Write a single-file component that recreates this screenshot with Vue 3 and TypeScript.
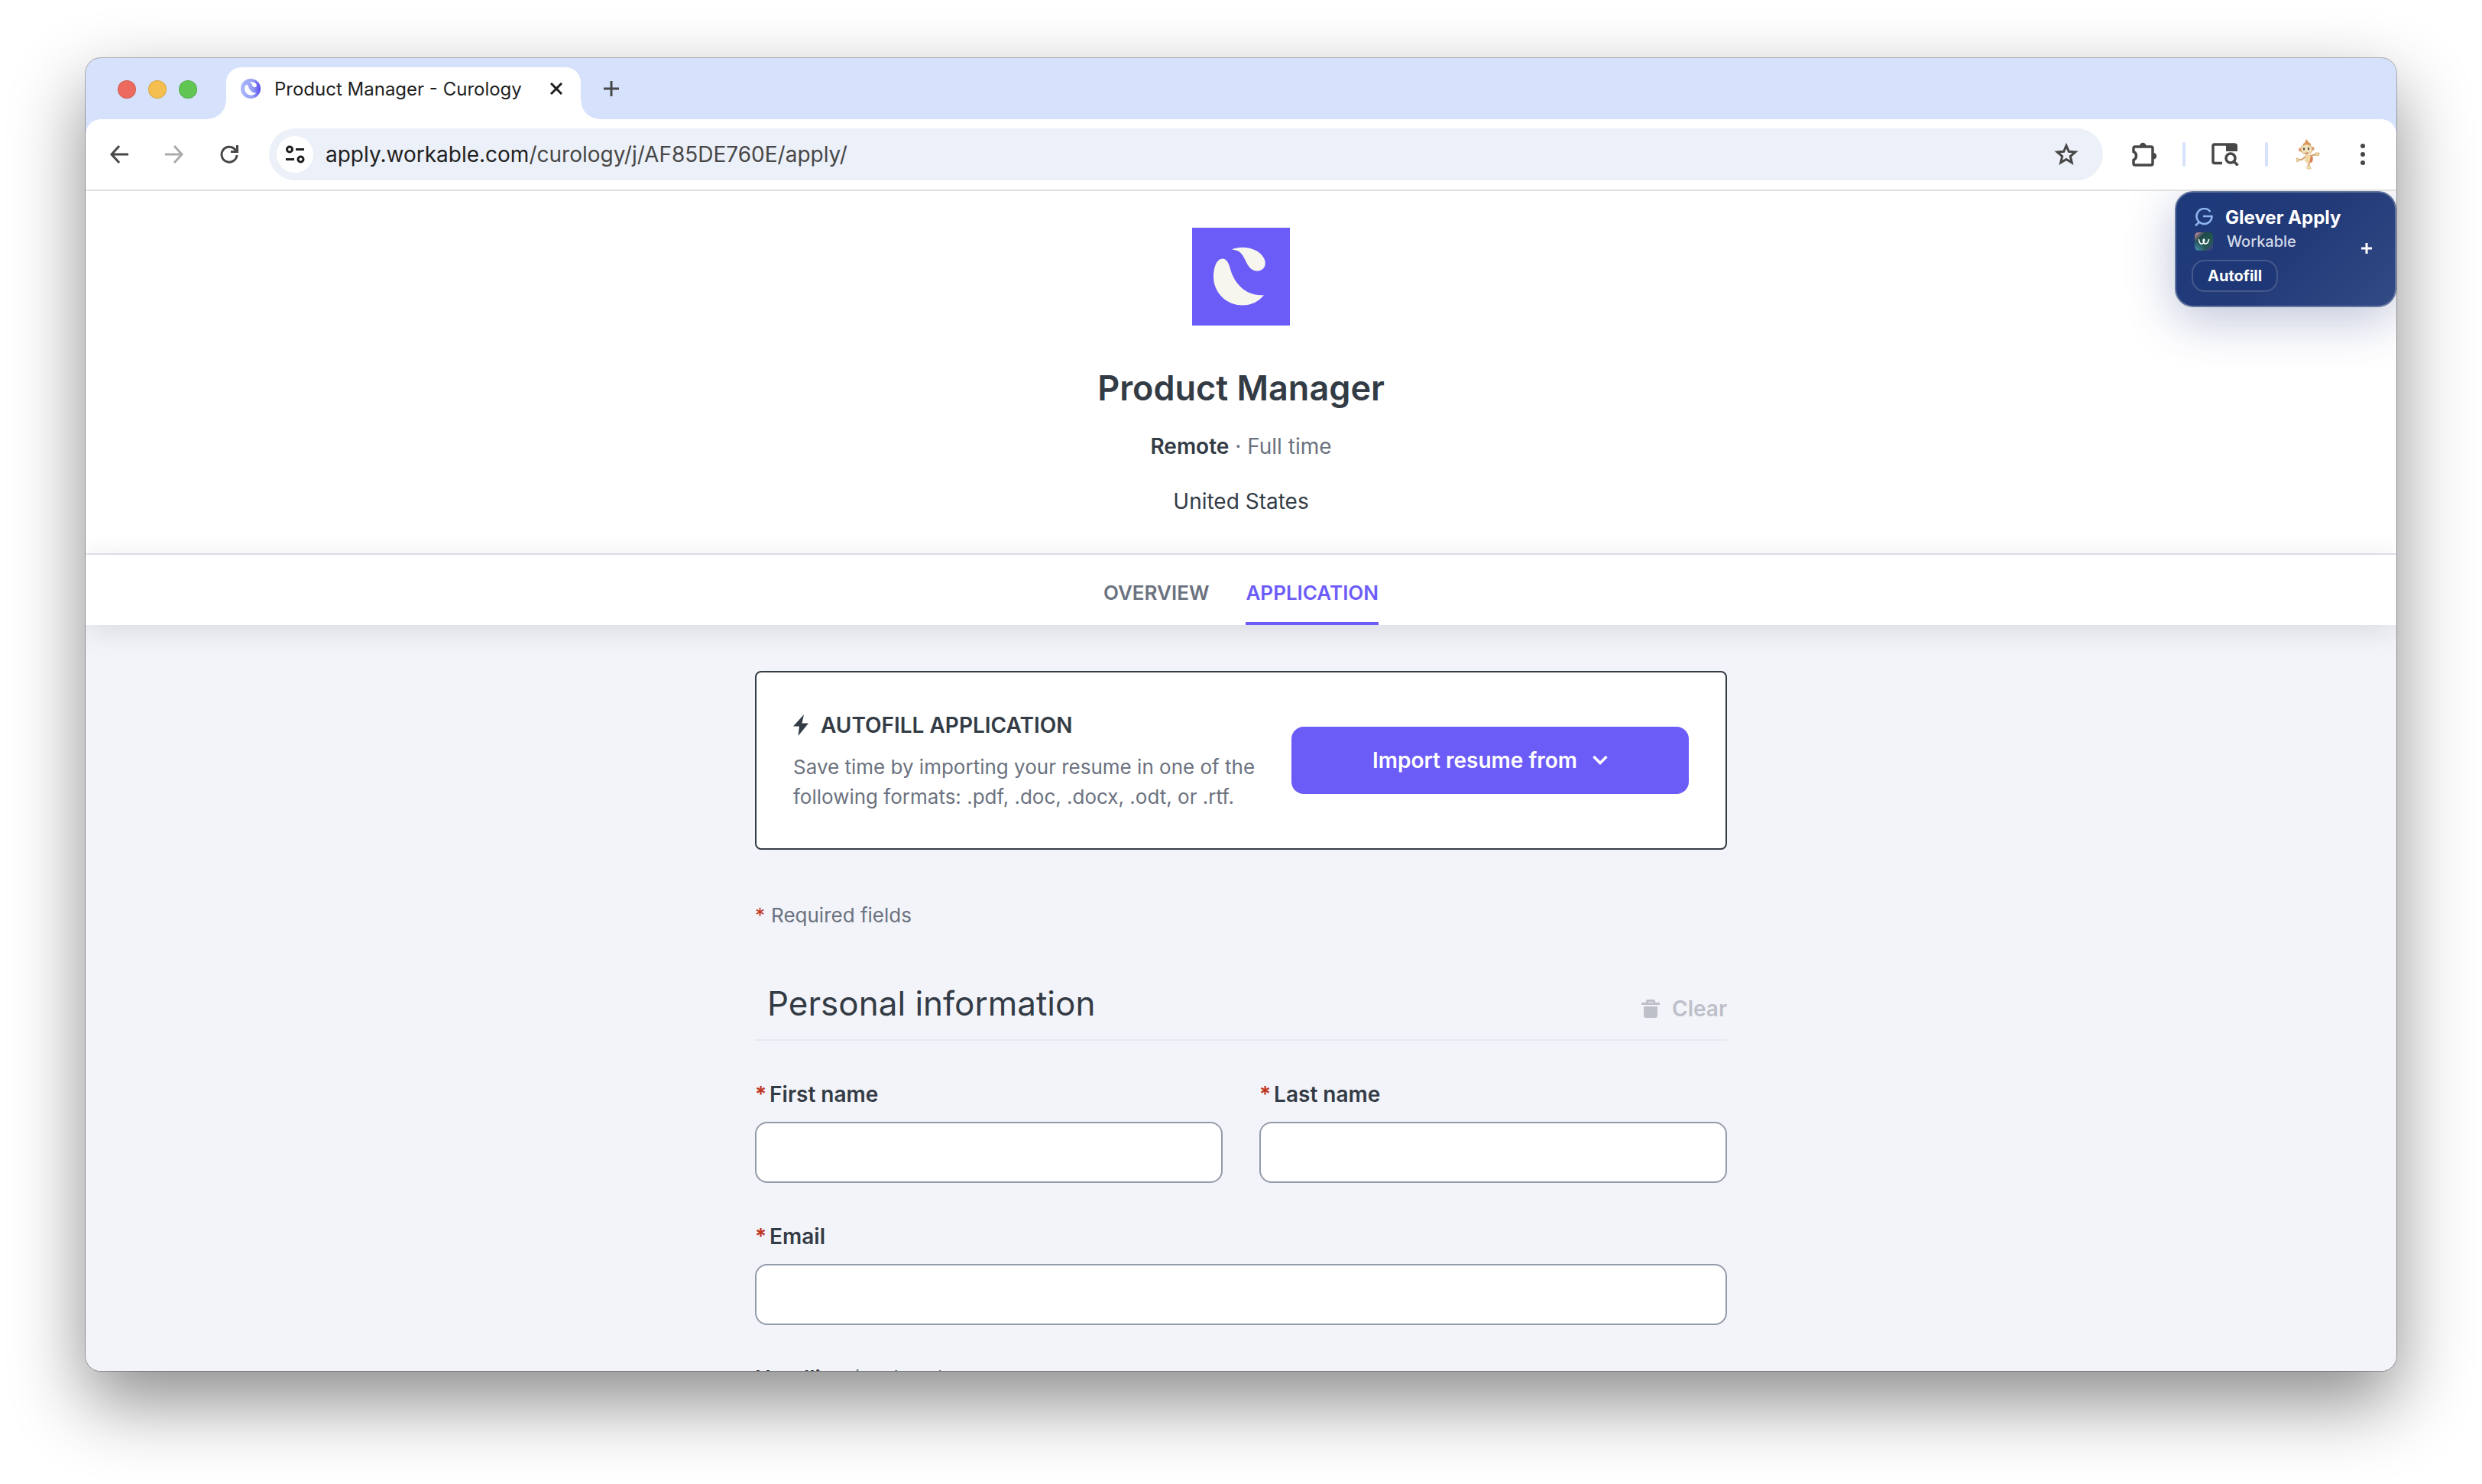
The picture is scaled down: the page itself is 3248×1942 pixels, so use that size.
<script setup lang="ts">
import { ref } from 'vue'

const url = ref({ host: 'apply.workable.com', path: '/curology/j/AF85DE760E/apply/' })
const firstName = ref('')
const lastName = ref('')
const email = ref('')
const headline = ref('')
</script>

<template>
  <div class="desktop">
    <div class="window">
      <header class="tabstrip">
        <div class="lights">
          <button class="light red" aria-label="Close window"></button>
          <button class="light yellow" aria-label="Minimize window"></button>
          <button class="light green" aria-label="Zoom window"></button>
        </div>
        <div class="tab">
          <svg class="favicon" viewBox="0 0 128 128" aria-hidden="true">
            <defs>
              <linearGradient id="fav" x1="0" y1="0" x2="1" y2="0">
                <stop offset="0" stop-color="#a9b8f8" />
                <stop offset="0.600" stop-color="#969ff6" />
                <stop offset="1" stop-color="#5b4bef" />
              </linearGradient>
            </defs>
            <circle cx="64" cy="64" r="64" fill="url(#fav)" />
            <g transform="translate(64 64) scale(1.15) translate(-62 -64)" fill="#fff">
              <path d="M52 29C60 25 74 25 84 30C93 35 97 42 95 49C93 56 86 58 80 55C71 51 70 40 64 33C61 30 57 29 52 29Z" />
              <path d="M40 41C45 41 48 46 50 54C56 75 72 89 94 88C87 97 77 101 66 101C44 101 28 84 28 64C28 52 32 41 40 41Z" />
            </g>
          </svg>
          <span class="tab-title">Product Manager - Curology</span>
          <button class="tab-close" aria-label="Close tab">
            <svg viewBox="0 0 16 16"><path d="M1 1L15 15M15 1L1 15" stroke="#1f1f1f" stroke-width="3" /></svg>
          </button>
        </div>
        <button class="new-tab" aria-label="New tab">
          <svg viewBox="0 0 20 20"><path d="M10 0V20M0 10H20" stroke="#474747" stroke-width="3" /></svg>
        </button>
      </header>

      <div class="toolbar">
        <div class="nav-buttons">
          <button aria-label="Back">
            <svg viewBox="0 0 24 24" fill="none" stroke="#474747" stroke-width="3"><path d="M24 12H2M12 1L2 12L12 23" /></svg>
          </button>
          <button aria-label="Forward">
            <svg viewBox="0 0 24 24" fill="none" stroke="#ababab" stroke-width="3"><path d="M0 12H22M12 1L22 12L12 23" /></svg>
          </button>
          <button aria-label="Reload">
            <svg viewBox="0 0 24 24" fill="none" stroke="#474747" stroke-width="3"><path d="M22 13A10 10 0 1 1 19 5L22 8M22.500 0V8.500H14" /></svg>
          </button>
        </div>
        <div class="omnibox">
          <button class="site-info" aria-label="View site information">
            <svg viewBox="0 0 26 24" fill="none" stroke="#1f1f1f" stroke-width="3">
              <circle cx="6" cy="5.500" r="3.500" /><path d="M14 5.500H25M1 18.500H12" /><circle cx="20.500" cy="18.500" r="3.500" />
            </svg>
          </button>
          <span class="url">{{ url.host }}<span class="path">{{ url.path }}</span></span>
          <button class="star" aria-label="Bookmark this tab">
            <svg viewBox="0 0 32 32" fill="none" stroke="#474747" stroke-width="3"><path d="M16 4.500L19.300 12.300L27.800 13L21.300 18.600L23.300 26.900L16 22.500L8.700 26.900L10.700 18.600L4.200 13L12.700 12.300Z" /></svg>
          </button>
        </div>
        <div class="actions">
          <button class="ext" aria-label="Extensions">
            <svg viewBox="0 0 32 32">
              <path d="M3.500 6.500Q2 6.500 2 8V12.500Q5.500 14 5.500 18Q5.500 21.500 2 23.500V28Q2 30 4 30H25Q27 30 27 28V8Q27 6 25 6H4Q2 6 2 8" fill="none" stroke="#474747" stroke-width="3.500" />
              <path d="M10 5A4.200 4.200 0 0 1 18.500 5ZM28 14A4.200 4.200 0 0 1 28 22.500Z" fill="#474747" />
            </svg>
          </button>
          <span class="divider"></span>
          <button class="side" aria-label="Search page in side panel">
            <svg viewBox="0 0 36 30" fill="none" stroke="#474747" stroke-width="3.500">
              <path d="M14 26.500H4Q2 26.500 2 24.500V4Q2 2 4 2H30Q32 2 32 4" />
              <path d="M19 1H31Q34 1 34 4V11H19Z" fill="#474747" stroke="none" />
              <circle cx="25" cy="20" r="6" /><path d="M29 24L34.500 29.500" />
            </svg>
          </button>
          <span class="divider"></span>
          <button class="avatar" aria-label="Profile">
            <svg viewBox="0 0 32 40">
              <path d="M11 11Q8 6 12 5L14 0L17 4Q22 6 19 11Z" fill="#dc9557" />
              <circle cx="6.500" cy="14" r="2.500" fill="#d9986a" /><circle cx="22" cy="12.500" r="2.500" fill="#d9986a" />
              <ellipse cx="14.500" cy="13.500" rx="7.500" ry="6.500" fill="#f1e2bb" stroke="#dba36c" />
              <path d="M11 11.500V14.500M17 11V14" stroke="#5a4a42" stroke-width="2" />
              <path d="M11 17Q14 19 17 16.500Q15 21.500 11 17" fill="#b8604f" />
              <path d="M12 21Q17 19 20 22L22 30L17 33L12 29Z" fill="#f0d9a4" />
              <path d="M13 23L8 27L2 27M19 22L25 20.500L30 20M18 31L17 36" fill="none" stroke="#d5a070" stroke-width="2" />
              <path d="M15 35L15 39H20L19 35Z" fill="#f2e2b4" stroke="#dfc490" />
              <path d="M1 25L5 26L4 29L2 30Z M26 18L31 18L31 21L27 22Z" fill="#f0dcae" stroke="#d9b884" />
              <path d="M20 22L23 24L22 30L18 31Z" fill="#d77f55" />
            </svg>
          </button>
          <button class="more" aria-label="Menu">
            <svg viewBox="0 0 8 28" fill="#474747"><circle cx="4" cy="3" r="3" /><circle cx="4" cy="14" r="3" /><circle cx="4" cy="25" r="3" /></svg>
          </button>
        </div>
      </div>

      <div class="page">
        <aside class="glever">
          <div class="g-main">
            <div class="g-row">
              <svg class="g-icon" viewBox="0 0 24 24" fill="none" stroke="#8db4ee" stroke-width="2.600"><path d="M20.500 5A10 10 0 1 0 22.500 11H11M6 18.500L1 23.500" /></svg>
              <span class="g-title">Glever Apply</span>
            </div>
            <div class="g-row">
              <svg class="g-icon" viewBox="0 0 24 24">
                <defs>
                  <linearGradient id="wk" x1="0" y1="0" x2="1" y2="1">
                    <stop offset="0" stop-color="#f29bb0" /><stop offset="0.300" stop-color="#1d4a4a" /><stop offset="0.700" stop-color="#255a52" /><stop offset="1" stop-color="#4a3a94" />
                  </linearGradient>
                  <radialGradient id="wk2" cx="0" cy="1" r="0.600"><stop offset="0" stop-color="#4a8fb8" /><stop offset="1" stop-color="#4a8fb8" stop-opacity="0" /></radialGradient>
                </defs>
                <rect width="24" height="24" rx="5" fill="url(#wk)" /><rect width="24" height="24" rx="5" fill="url(#wk2)" />
                <path d="M5.500 9.500C6 14 8 16 10 15C12.500 14 13.500 9 12 9C10.500 9 11 15 14 15C17 15 18 12 18.500 9.500" fill="none" stroke="#fff" stroke-width="1.600" stroke-linecap="round" />
              </svg>
              <span class="g-sub">Workable</span>
            </div>
            <button class="g-autofill">Autofill</button>
          </div>
          <button class="g-plus" aria-label="Expand">
            <svg viewBox="0 0 14 14"><path d="M7 0V14M0 7H14" stroke="#fff" stroke-width="3" /></svg>
          </button>
        </aside>

        <section class="hero">
          <svg class="logo" viewBox="0 0 128 128" role="img" aria-label="Curology">
            <rect width="128" height="128" fill="#6c5cf7" />
            <g fill="#f6f6ee">
              <path d="M52 28.500C60 24.500 74 24.500 84 30C93 35 97 43 95.500 49C93.500 56.500 85 58.500 79 55C71 50 70 40 64 33.500C61 30 57 29 52 28.500Z" />
              <path d="M40 40.500C45 40.500 48 46 50 54C56 75 72 90 94 88C87 97 77 101.500 66 101.500C44 101.500 28 84 28 64C28 52 32 40.500 40 40.500Z" />
            </g>
          </svg>
          <h1>Product Manager</h1>
          <p class="meta"><strong>Remote</strong> · <span>Full time</span></p>
          <p class="place">United States</p>
        </section>

        <nav class="tabs">
          <a href="#overview">OVERVIEW</a>
          <a href="#application" class="active" aria-current="page">APPLICATION</a>
        </nav>

        <main class="content">
          <section class="import-card">
            <div class="import-text">
              <h2>
                <svg viewBox="0 0 20 28" aria-hidden="true"><path d="M14 0L0 15.500H8L6.500 28L20 11.500H11.500Z" fill="#333b45" /></svg>
                AUTOFILL APPLICATION
              </h2>
              <p>Save time by importing your resume in one of the following formats: .pdf, .doc, .docx, .odt, or .rtf.</p>
            </div>
            <button class="import-button">
              Import resume from
              <svg viewBox="0 0 20 14" aria-hidden="true"><path d="M1.500 2L10 10.500L18.500 2" fill="none" stroke="#fff" stroke-width="3.500" /></svg>
            </button>
          </section>

          <p class="required-note"><span class="req">*</span>Required fields</p>

          <form @submit.prevent>
            <div class="section-head">
              <h2>Personal information</h2>
              <button type="button" class="clear" disabled>
                <svg viewBox="0 0 24 24" aria-hidden="true"><path d="M6 4V2Q6 0 8 0H16Q18 0 18 2V4H24V7H0V4ZM9 3V4H15V3ZM3 9H21V21Q21 24 18 24H6Q3 24 3 21Z" fill="#bdc0c9" fill-rule="evenodd" /></svg>
                Clear
              </button>
            </div>
            <div class="fields">
              <div class="field half">
                <label for="first"><span class="req">*</span>First name</label>
                <input id="first" v-model="firstName" type="text" />
              </div>
              <div class="field half">
                <label for="last"><span class="req">*</span>Last name</label>
                <input id="last" v-model="lastName" type="text" />
              </div>
              <div class="field">
                <label for="email"><span class="req">*</span>Email</label>
                <input id="email" v-model="email" type="email" />
              </div>
              <div class="field">
                <label for="headline">Headline <span class="opt">(Optional)</span></label>
                <input id="headline" v-model="headline" type="text" />
              </div>
            </div>
          </form>
        </main>
      </div>
    </div>
  </div>
</template>

<style>
body {
  margin: 0;
  background: #fff;
}
</style>

<style scoped>
* {
  box-sizing: border-box;
}
.desktop {
  height: 100vh;
  padding: 76px 112px 148px;
  display: flex;
  overflow: hidden;
  font-family: Inter, "Liberation Sans", sans-serif;
  color: #333b45;
}
svg {
  display: block;
}
button {
  font-family: inherit;
  border: 0;
  padding: 0;
  background: none;
}
h1,
h2,
p {
  margin: 0;
}
.window {
  flex: 1;
  min-width: 0;
  display: flex;
  flex-direction: column;
  background: #d6e1fb;
  border-radius: 20px;
  overflow: hidden;
  box-shadow: 0 0 0 1px rgba(0, 0, 0, 0.28), 0 40px 96px rgba(0, 0, 0, 0.46);
}
.tabstrip {
  flex: none;
  height: 80px;
  display: flex;
  align-items: flex-end;
}
.lights {
  display: flex;
  align-items: center;
  gap: 16px;
  height: 78px;
  padding-left: 42px;
  width: 184px;
}
.light {
  width: 24px;
  height: 24px;
  border-radius: 50%;
  border: 1px solid rgba(0, 0, 0, 0.12);
}
.red {
  background: #ec6a5e;
}
.yellow {
  background: #f5bf4f;
}
.green {
  background: #61c554;
}
.tab {
  position: relative;
  width: 464px;
  height: 68px;
  padding: 0 24px 12px 19px;
  background: #fff;
  border-radius: 20px 20px 0 0;
  display: flex;
  align-items: center;
}
.tab::before,
.tab::after {
  content: "";
  position: absolute;
  bottom: 0;
  width: 24px;
  height: 24px;
}
.tab::before {
  right: 100%;
  background: radial-gradient(circle at 0 0, transparent 23px, #fff 24px);
}
.tab::after {
  left: 100%;
  background: radial-gradient(circle at 100% 0, transparent 23px, #fff 24px);
}
.favicon {
  width: 26px;
  height: 26px;
}
.tab-title {
  flex: 1;
  padding-left: 18px;
  font-size: 24px;
  color: #1f1f1f;
  white-space: nowrap;
}
.tab-close svg {
  width: 16px;
  height: 16px;
}
.new-tab {
  height: 68px;
  padding: 0 30px 12px;
}
.new-tab svg {
  width: 20px;
  height: 20px;
}
.toolbar {
  flex: none;
  height: 94px;
  background: #fff;
  border-bottom: 2px solid #e1e1e1;
  border-radius: 20px 20px 0 0;
  display: flex;
  align-items: center;
}
.nav-buttons {
  display: flex;
  gap: 48px;
  padding: 0 40px 0 32px;
}
.nav-buttons svg {
  width: 24px;
  height: 24px;
}
.omnibox {
  flex: 1;
  height: 68px;
  border-radius: 34px;
  background: #ecf0f8;
  display: flex;
  align-items: center;
  padding: 0 32px 0 10px;
}
.site-info {
  width: 48px;
  height: 48px;
  border-radius: 50%;
  background: #fff;
  display: flex;
  align-items: center;
  justify-content: center;
}
.site-info svg {
  width: 26px;
  height: 24px;
}
.url {
  flex: 1;
  padding-left: 16px;
  font-size: 28px;
  color: #1f1f1f;
  white-space: nowrap;
}
.path {
  color: #474747;
}
.star svg {
  width: 32px;
  height: 32px;
}
.actions {
  display: flex;
  align-items: center;
  padding: 0 40px 0 38px;
}
.ext svg {
  width: 32px;
  height: 32px;
}
.divider {
  width: 4px;
  height: 32px;
  border-radius: 2px;
  background: #d6e1fb;
  margin: 0 34px;
}
.side svg {
  width: 36px;
  height: 30px;
}
.avatar {
  padding-left: 2px;
}
.avatar svg {
  width: 32px;
  height: 40px;
}
.more {
  padding-left: 52px;
}
.more svg {
  width: 8px;
  height: 28px;
}
.page {
  position: relative;
  flex: 1;
  min-height: 0;
  overflow: hidden;
  background: #f3f4f9;
}
.glever {
  position: absolute;
  top: 0;
  right: 0;
  z-index: 2;
  width: 290px;
  padding: 16px 30px 18px 20px;
  border: 2px solid #62759f;
  border-radius: 24px;
  background: linear-gradient(135deg, #1e3a7b, #223a78 50%, #324b85);
  box-shadow: 0 16px 64px rgba(40, 55, 130, 0.3);
  color: #fff;
  display: flex;
  align-items: center;
  justify-content: space-between;
}
.g-main {
  display: flex;
  flex-direction: column;
  align-items: flex-start;
}
.g-row {
  display: flex;
  align-items: center;
  gap: 16px;
  height: 32px;
  padding-left: 4px;
}
.g-icon {
  width: 24px;
  height: 24px;
}
.g-title {
  font-size: 24px;
  font-weight: 700;
}
.g-sub {
  padding-left: 2px;
  font-size: 20px;
  font-weight: 500;
  color: #d3d8e5;
}
.g-autofill {
  height: 42px;
  margin-top: 8px;
  padding: 0 19px;
  border: 2px solid #45598d;
  border-radius: 17px;
  background: #1e3877;
  color: #fff;
  font-size: 20px;
  font-weight: 700;
}
.g-plus svg {
  width: 14px;
  height: 14px;
}
.hero {
  height: 476px;
  padding-top: 48px;
  background: #fff;
  border-bottom: 2px solid #e4e7f1;
  display: flex;
  flex-direction: column;
  align-items: center;
}
.logo {
  width: 128px;
  height: 128px;
}
h1 {
  margin-top: 50px;
  font-size: 45px;
  line-height: 64px;
  font-weight: 600;
}
.meta {
  margin-top: 24px;
  font-size: 28px;
  line-height: 40px;
  color: #6b7280;
}
.meta strong {
  font-weight: 600;
  color: #333b45;
}
.place {
  margin-top: 32px;
  font-size: 28px;
  line-height: 40px;
}
.tabs {
  position: relative;
  display: flex;
  justify-content: center;
  gap: 48px;
  height: 92px;
  background: #fff;
  box-shadow: 0 6px 40px rgba(0, 0, 0, 0.11);
}
.tabs a {
  padding-top: 6px;
  border-bottom: 4px solid transparent;
  font-size: 26px;
  line-height: 88px;
  font-weight: 600;
  color: #6b7280;
  text-decoration: none;
}
.tabs .active {
  color: #6c5cf7;
  border-color: #6c5cf7;
}
.content {
  max-width: 1272px;
  margin: 0 auto;
  padding-top: 60px;
}
.import-card {
  height: 234px;
  padding: 0 48px;
  background: #fff;
  border: 2px solid #333b45;
  border-radius: 8px;
  display: flex;
  align-items: center;
  justify-content: space-between;
}
.import-text {
  width: 620px;
}
.import-text h2 {
  display: flex;
  align-items: center;
  gap: 16px;
  font-size: 28px;
  line-height: 40px;
  font-weight: 600;
}
.import-text h2 svg {
  width: 20px;
  height: 28px;
}
.import-text p {
  margin-top: 15px;
  font-size: 26px;
  line-height: 39px;
  color: #6b7280;
}
.import-button {
  width: 520px;
  height: 88px;
  border-radius: 16px;
  background: #6c5cf7;
  color: #fff;
  font-size: 28px;
  font-weight: 600;
  display: flex;
  align-items: center;
  justify-content: center;
  gap: 20px;
}
.import-button svg {
  width: 20px;
  height: 14px;
}
.required-note {
  margin-top: 66px;
  font-size: 26px;
  line-height: 40px;
  color: #6b7280;
  display: flex;
  gap: 8px;
}
.req {
  color: #c0351f;
}
.section-head {
  margin-top: 62px;
  height: 82px;
  padding-left: 16px;
  border-bottom: 2px solid #e6eaf1;
  display: flex;
  align-items: center;
  justify-content: space-between;
}
.section-head h2 {
  padding-bottom: 14px;
  font-size: 44px;
  line-height: 64px;
  font-weight: 400;
}
.clear {
  display: flex;
  align-items: center;
  gap: 16px;
  font-size: 28px;
  font-weight: 600;
  color: #bdc0c9;
}
.clear svg {
  width: 24px;
  height: 24px;
}
.fields {
  display: flex;
  flex-wrap: wrap;
  gap: 50px 48px;
  padding-top: 50px;
}
.field {
  flex: 1 1 100%;
}
.field.half {
  flex: 1 1 40%;
}
.field label {
  display: flex;
  gap: 4px;
  margin-bottom: 16px;
  font-size: 28px;
  line-height: 40px;
  font-weight: 600;
}
.opt {
  padding-left: 4px;
  color: #6b7280;
  font-size: 26px;
  font-weight: 400;
}
.field input {
  display: block;
  width: 100%;
  height: 80px;
  padding: 0 24px;
  border: 2px solid #939bab;
  border-radius: 16px;
  background: #fff;
  font: inherit;
  font-size: 28px;
}
</style>
